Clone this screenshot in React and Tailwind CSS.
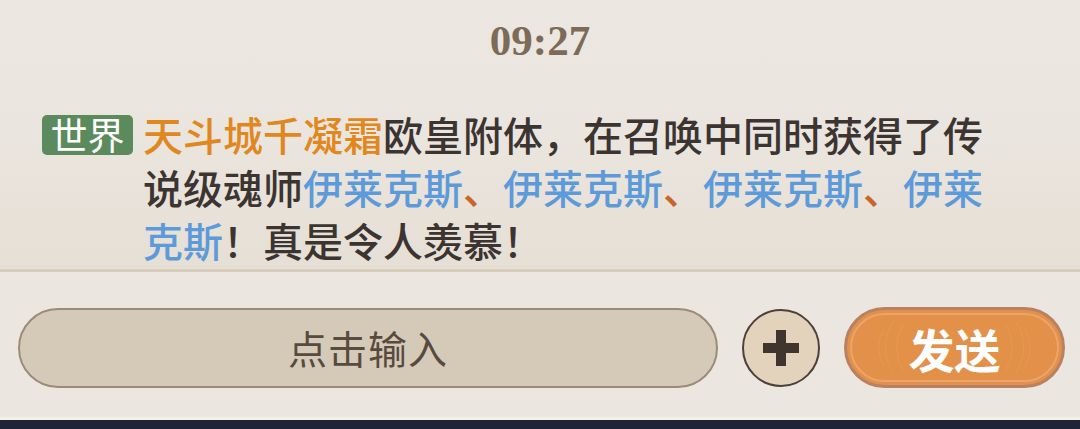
import React from "react";

const cjk = { fontFamily: '"Noto Sans CJK SC", "Noto Sans", sans-serif' };

const Blue = ({ children }) => <span className="text-[#5c9ad9]">{children}</span>;
const Dun = () => <span className="text-[#c8652b]">、</span>;

const SendButton = () => (
  <button className="relative w-[221px] h-[81px] rounded-full border-[3px] border-[#b98161] bg-[#e3904a] p-[3px] shrink-0">
    <div className="relative w-full h-full rounded-full border-2 border-[#eba56a] flex items-center justify-center overflow-hidden">
      <svg className="absolute inset-0 w-full h-full" viewBox="0 0 209 69" fill="none">
        <g stroke="#e9a063" strokeWidth="1" opacity="0.55">
          <path d="M40 6 Q22 34 40 63" />
          <path d="M50 10 Q36 34 50 59" />
          <path d="M30 14 Q18 34 30 55" />
          <path d="M169 6 Q187 34 169 63" />
          <path d="M159 10 Q173 34 159 59" />
          <path d="M179 14 Q191 34 179 55" />
        </g>
      </svg>
      <span className="relative text-white text-[46px] font-bold leading-none" style={cjk}>
        发送
      </span>
    </div>
  </button>
);

export default function App() {
  return (
    <div className="w-[1080px] h-[429px] overflow-hidden bg-[#ebe6df] flex flex-col" style={cjk}>
      {/* chat area */}
      <div className="h-[272px] bg-gradient-to-b from-[#ece8e1] via-[#eae5de] to-[#e6dfd5] border-b-[3px] border-[#d8ccbb] flex flex-col">
        <div className="h-[80px] flex items-center justify-center">
          <span
            className="text-[43px] font-bold text-[#7b6b57] leading-none"
            style={{ fontFamily: '"Liberation Serif", serif' }}
          >
            09:27
          </span>
        </div>
        <div className="flex pl-[42px] pt-[28px]">
          <div className="h-[53px] flex items-center shrink-0">
            <span className="bg-[#5b8a5c] text-white text-[37px] leading-none rounded-[5px] w-[91px] h-[40px] flex items-center justify-center">
              世界
            </span>
          </div>
          <p className="w-[846px] ml-[10px] text-[40px] leading-[53px] font-medium text-[#3b3431]">
            <span className="text-[#e0881e]">天斗城千凝霜</span>欧皇附体，在召唤中同时获得了传说级魂师
            <Blue>伊莱克斯</Blue>
            <Dun />
            <Blue>伊莱克斯</Blue>
            <Dun />
            <Blue>伊莱克斯</Blue>
            <Dun />
            <Blue>伊莱克斯</Blue>！真是令人羡慕！
          </p>
        </div>
      </div>

      {/* input bar */}
      <div className="h-[145px] flex items-center pl-[18px] pr-[14px] pt-[6px] gap-[24px]">
        <div className="w-[700px] h-[80px] rounded-full border-2 border-[#9c8b77] bg-[#d5cab8] flex items-center justify-center shrink-0">
          <span className="text-[39px] text-[#574b40] tracking-[1px]">点击输入</span>
        </div>
        <div className="w-[78px] h-[78px] rounded-full border-2 border-[#4c4139] bg-[#e3d3bd] flex items-center justify-center shrink-0">
          <svg width="36" height="36" viewBox="0 0 36 36">
            <rect x="13" y="0" width="10" height="36" fill="#3f342e" />
            <rect x="0" y="13" width="36" height="10" fill="#3f342e" />
          </svg>
        </div>
        <SendButton />
      </div>

      {/* bottom strip */}
      <div className="h-[3px] bg-[#f3f0ea]" />
      <div className="flex-1 bg-[#1f2438]" />
    </div>
  );
}
